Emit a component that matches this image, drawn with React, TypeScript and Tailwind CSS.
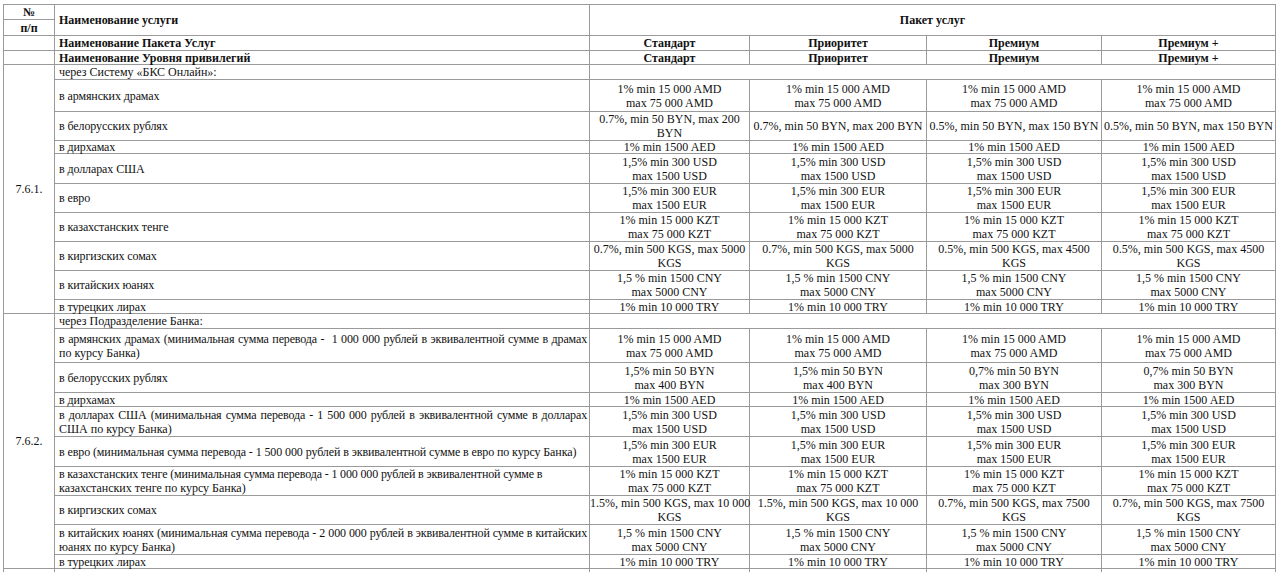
type Row = {
  label: string[];
  values: string[][];
  h: string;
  justify?: boolean;
};

const rep = (v: string[]): string[][] => [v, v, v, v];

const online: Row[] = [
  { label: ['в армянских драмах'], values: rep(['1% min 15 000 AMD', 'max 75 000 AMD']), h: 'h-[32px]' },
  {
    label: ['в белорусских рублях'],
    values: [
      ['0.7%, min 50 BYN, max 200', 'BYN'],
      ['0.7%, min 50 BYN, max 200 BYN'],
      ['0.5%, min 50 BYN, max 150 BYN'],
      ['0.5%, min 50 BYN, max 150 BYN'],
    ],
    h: 'h-[29px]',
  },
  { label: ['в дирхамах'], values: rep(['1% min 1500 AED']), h: 'h-[13px]' },
  { label: ['в долларах США'], values: rep(['1,5% min 300 USD', 'max 1500 USD']), h: 'h-[30px]' },
  { label: ['в евро'], values: rep(['1,5% min 300 EUR', 'max 1500 EUR']), h: 'h-[29px]' },
  { label: ['в казахстанских тенге'], values: rep(['1% min 15 000 KZT', 'max 75 000 KZT']), h: 'h-[29px]' },
  {
    label: ['в киргизских сомах'],
    values: [
      ['0.7%, min 500 KGS, max 5000', 'KGS'],
      ['0.7%, min 500 KGS, max 5000', 'KGS'],
      ['0.5%, min 500 KGS, max 4500', 'KGS'],
      ['0.5%, min 500 KGS, max 4500', 'KGS'],
    ],
    h: 'h-[29px]',
  },
  { label: ['в китайских юанях'], values: rep(['1,5 % min 1500 CNY', 'max 5000 CNY']), h: 'h-[29px]' },
  { label: ['в турецких лирах'], values: rep(['1% min 10 000 TRY']), h: 'h-[14px]' },
];

const branch: Row[] = [
  {
    label: [
      'в армянских драмах (минимальная сумма перевода -  1 000 000 рублей в эквивалентной сумме в драмах',
      'по курсу Банка)',
    ],
    values: rep(['1% min 15 000 AMD', 'max 75 000 AMD']),
    h: 'h-[34px]',
    justify: true,
  },
  {
    label: ['в белорусских рублях'],
    values: [
      ['1,5% min 50 BYN', 'max 400 BYN'],
      ['1,5% min 50 BYN', 'max 400 BYN'],
      ['0,7% min 50 BYN', 'max 300 BYN'],
      ['0,7% min 50 BYN', 'max 300 BYN'],
    ],
    h: 'h-[30px]',
  },
  { label: ['в дирхамах'], values: rep(['1% min 1500 AED']), h: 'h-[14px]' },
  {
    label: [
      'в долларах США (минимальная сумма перевода - 1 500 000 рублей в эквивалентной сумме в долларах',
      'США по курсу Банка)',
    ],
    values: rep(['1,5% min 300 USD', 'max 1500 USD']),
    h: 'h-[30px]',
    justify: true,
  },
  {
    label: ['в евро (минимальная сумма перевода - 1 500 000 рублей в эквивалентной сумме в евро по курсу Банка)'],
    values: rep(['1,5% min 300 EUR', 'max 1500 EUR']),
    h: 'h-[30px]',
  },
  {
    label: [
      'в казахстанских тенге (минимальная сумма перевода - 1 000 000 рублей в эквивалентной сумме в',
      'казахстанских тенге по курсу Банка)',
    ],
    values: rep(['1% min 15 000 KZT', 'max 75 000 KZT']),
    h: 'h-[29px]',
  },
  {
    label: ['в киргизских сомах'],
    values: [
      ['1.5%, min 500 KGS, max 10 000', 'KGS'],
      ['1.5%, min 500 KGS, max 10 000', 'KGS'],
      ['0.7%, min 500 KGS, max 7500', 'KGS'],
      ['0.7%, min 500 KGS, max 7500', 'KGS'],
    ],
    h: 'h-[29px]',
  },
  {
    label: [
      'в китайских юанях (минимальная сумма перевода - 2 000 000 рублей в эквивалентной сумме в китайских',
      'юанях по курсу Банка)',
    ],
    values: rep(['1,5 % min 1500 CNY', 'max 5000 CNY']),
    h: 'h-[30px]',
    justify: true,
  },
  { label: ['в турецких лирах'], values: rep(['1% min 10 000 TRY']), h: 'h-[14px]' },
];

const cell = 'border border-[#9a9a9a] p-0 align-middle';
const packages = ['Стандарт', 'Приоритет', 'Премиум', 'Премиум +'];

function Label({ row }: { row: Row }) {
  if (row.label.length === 1) return <span className="whitespace-nowrap tracking-[-0.1px]">{row.label[0]}</span>;
  return (
    <>
      <span
        className={
          row.justify
            ? 'block whitespace-pre text-justify [text-align-last:justify] tracking-[-0.15px]'
            : 'block whitespace-nowrap tracking-[-0.15px]'
        }
      >
        {row.label[0]}
      </span>
      <span className="block">{row.label[1]}</span>
    </>
  );
}

function Section({ num, title, rows }: { num: string; title: string; rows: Row[] }) {
  return (
    <>
      <tr className="h-[15px] leading-[12px]">
        <td rowSpan={rows.length + 1} className={`${cell} text-center leading-[14px]`}>
          {num}
        </td>
        <td className={`${cell} pl-1`}>{title}</td>
        <td colSpan={4} className={cell}></td>
      </tr>
      {rows.map((row, i) => {
        const single = row.label.length === 1 && row.values.every((v) => v.length === 1);
        return (
          <tr key={i} className={`${row.h} ${single ? 'leading-[12px]' : 'leading-[14px]'}`}>
            <td className={`${cell} pl-1 pr-[2px]`}>
              <Label row={row} />
            </td>
            {row.values.map((v, j) => (
              <td key={j} className={`${cell} text-center`}>
                {v.map((line, k) => (
                  <span key={k} className="block whitespace-nowrap">
                    {line}
                  </span>
                ))}
              </td>
            ))}
          </tr>
        );
      })}
    </>
  );
}

export default function App() {
  return (
    <div className="w-[1280px] h-[572px] overflow-hidden bg-white pl-[3px] pt-[4px]">
      <table
        className="table-fixed border-collapse text-[12px] leading-[14px] text-[#111111]"
        style={{ fontFamily: '"Liberation Serif", "Times New Roman", serif', width: 1272 }}
      >
        <colgroup>
          <col className="w-[51px]" />
          <col className="w-[535px]" />
          <col className="w-[160px]" />
          <col className="w-[177px]" />
          <col className="w-[175px]" />
          <col className="w-[174px]" />
        </colgroup>
        <tbody>
          <tr className="h-[15px] font-bold leading-[12px]">
            <td className={`${cell} text-center`}>№</td>
            <td rowSpan={2} className={`${cell} pl-1`}>
              Наименование услуги
            </td>
            <td rowSpan={2} colSpan={4} className={`${cell} text-center`}>
              Пакет услуг
            </td>
          </tr>
          <tr className="h-[16px] font-bold leading-[12px]">
            <td className={`${cell} text-center`}>п/п</td>
          </tr>
          <tr className="h-[15px] font-bold leading-[12px]">
            <td className={cell}></td>
            <td className={`${cell} pl-1`}>Наименование Пакета Услуг</td>
            {packages.map((p) => (
              <td key={p} className={`${cell} text-center`}>
                {p}
              </td>
            ))}
          </tr>
          <tr className="h-[14px] font-bold leading-[12px]">
            <td className={cell}></td>
            <td className={`${cell} pl-1`}>Наименование Уровня привилегий</td>
            {packages.map((p) => (
              <td key={p} className={`${cell} text-center`}>
                {p}
              </td>
            ))}
          </tr>
          <Section num="7.6.1." title="через Систему «БКС Онлайн»:" rows={online} />
          <Section num="7.6.2." title="через Подразделение Банка:" rows={branch} />
          <tr className="h-[20px]">
            <td className={cell}></td>
            <td className={cell}></td>
            <td className={cell}></td>
            <td className={cell}></td>
            <td className={cell}></td>
            <td className={cell}></td>
          </tr>
        </tbody>
      </table>
    </div>
  );
}
